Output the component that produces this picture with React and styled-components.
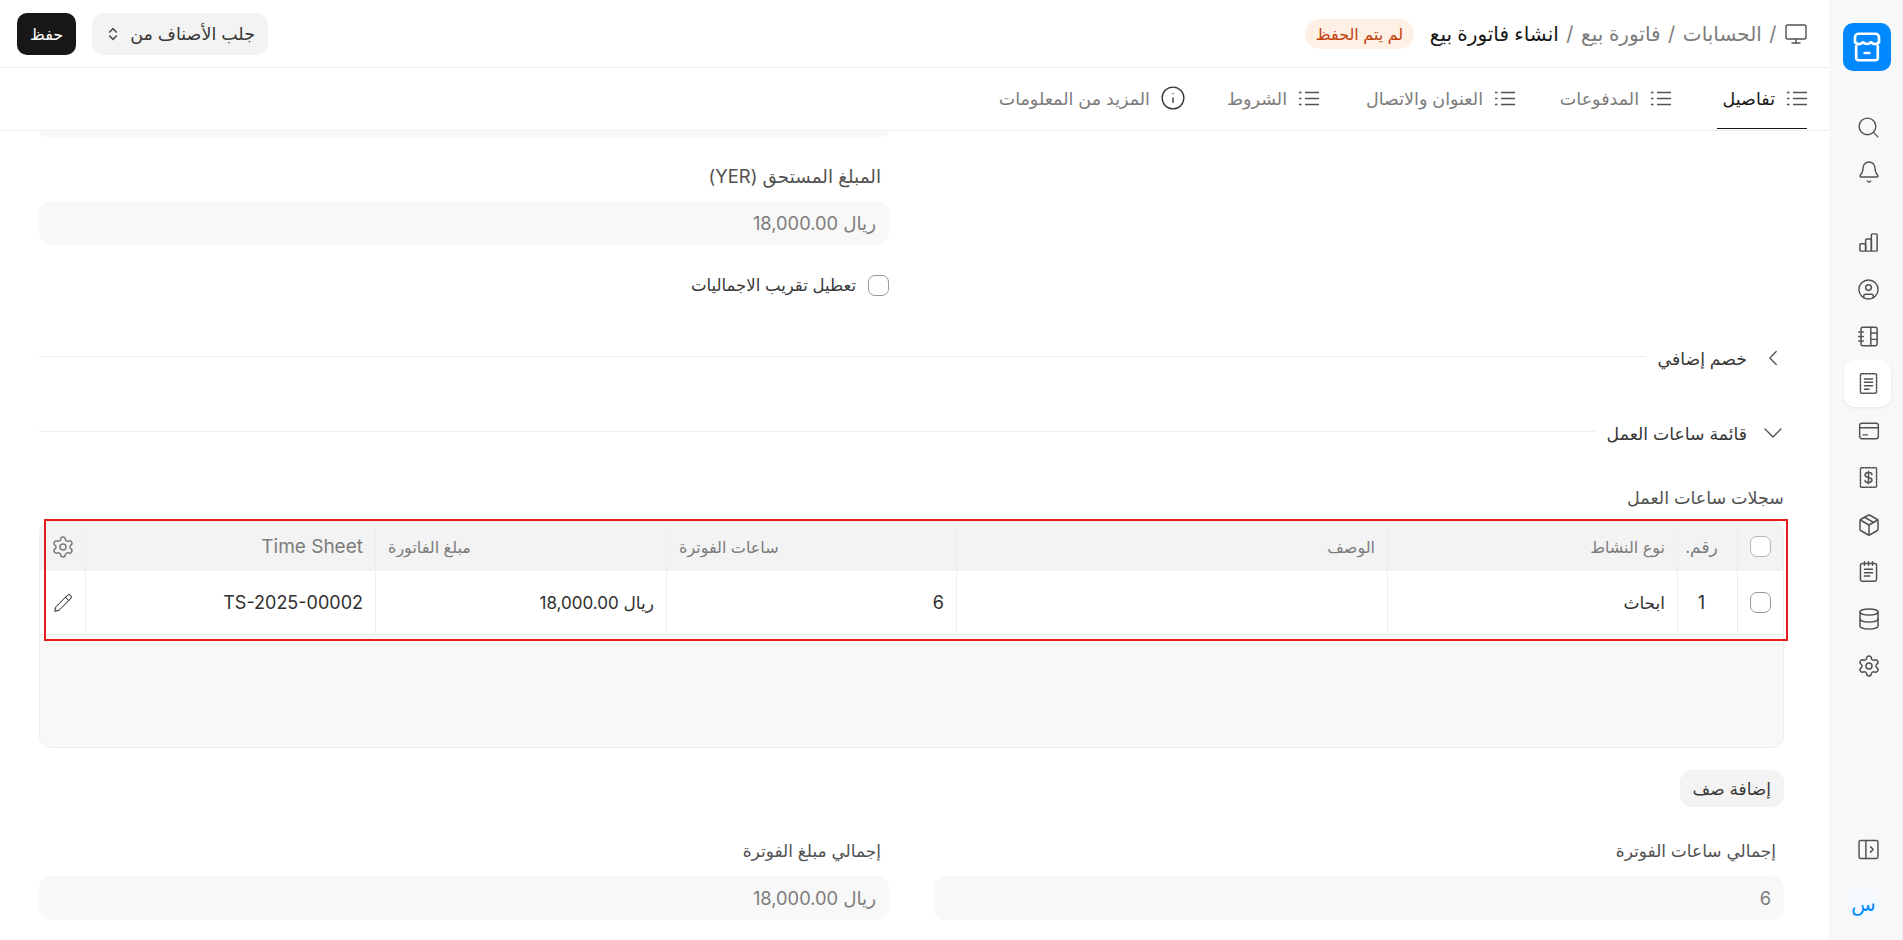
import React from 'react'
import styled, { createGlobalStyle } from 'styled-components'
import { Monitor, Info, Search, Bell, CircleUser, Settings, Package, Database, ChevronLeft, ChevronDown, ChevronsUpDown, Pencil } from 'lucide-react'

const GlobalStyle = createGlobalStyle`
  html, body { margin: 0; padding: 0; height: 100%; background: #fff; }
  body { font-family: Inter, "Noto Sans", "DejaVu Sans", sans-serif; color: #171717; overflow: hidden; }
  * { box-sizing: border-box; }
`

const Page = styled.div`
  direction: rtl;
  display: flex;
  height: 940px;
  overflow: hidden;
`

/* ---------- sidebar ---------- */
const Sidebar = styled.aside`
  width: 74px;
  flex: none;
  background: #f8f8f8;
  border-right: 1px solid #ededed;
  display: flex;
  flex-direction: column;
  align-items: center;
  padding: 23px 0 0 3px;
  direction: ltr;
  color: #525252;
`
const Logo = styled.div`
  width: 48px;
  height: 48px;
  border-radius: 10px;
  background: #0089ff;
  display: flex;
  align-items: center;
  justify-content: center;
`
const SideGroup = styled.div`
  display: flex;
  flex-direction: column;
  align-items: center;
  margin-top: ${p => p.$top}px;
`
const SideItem = styled.div`
  width: 47px;
  height: ${p => p.$h || 47}px;
  padding-left: 3px;
  border-radius: 10px;
  display: flex;
  align-items: center;
  justify-content: center;
  background: ${p => (p.$active ? '#fff' : 'transparent')};
  box-shadow: ${p => (p.$active ? '0 1px 3px rgba(0,0,0,.08)' : 'none')};
`
const SideBottom = styled.div`
  margin-top: auto;
  padding-bottom: 20px;
  display: flex;
  flex-direction: column;
  align-items: center;
  gap: 27px;
  padding-left: 3px;
`
const Avatar = styled.div`
  width: 33px;
  height: 33px;
  border-radius: 50%;
  background: #f3f9ff;
  color: #0089ff;
  font-size: 20px;
  display: flex;
  align-items: center;
  justify-content: center;
  margin-right: 10px;
`

/* ---------- main ---------- */
const Main = styled.main`
  flex: 1;
  min-width: 0;
  display: flex;
  flex-direction: column;
`
const TopBar = styled.header`
  height: 68px;
  flex: none;
  border-bottom: 1px solid #ededed;
  display: flex;
  align-items: center;
  justify-content: space-between;
  padding: 0 21px 0 17px;
`
const Crumbs = styled.div`
  display: flex;
  align-items: center;
  gap: 7.500px;
  font-size: 20px;
  color: #7c7c7c;
`
const CrumbTitle = styled.span`
  color: #171717;
  font-weight: 500;
`
const Pill = styled.span`
  height: 30px;
  padding: 0 11px;
  border-radius: 15px;
  background: #fff0e6;
  color: #c2410c;
  font-size: 16px;
  display: inline-flex;
  align-items: center;
  margin-right: 8px;
`
const Actions = styled.div`
  display: flex;
  align-items: center;
  gap: 16px;
`
const Button = styled.button`
  font-family: inherit;
  height: ${p => p.$h || 42}px;
  border: 0;
  border-radius: ${p => (p.$dark ? 10 : 12)}px;
  padding: 0 ${p => p.$pad || 13}px;
  background: ${p => (p.$dark ? '#171717' : '#f3f3f3')};
  color: ${p => (p.$dark ? '#fff' : '#383838')};
  font-size: ${p => p.$size || 17.5}px;
  font-weight: ${p => (p.$dark ? 500 : 400)};
  display: inline-flex;
  align-items: center;
  gap: 9px;
`
const Tabs = styled.nav`
  height: 63px;
  flex: none;
  border-bottom: 1px solid #ededed;
  display: flex;
  align-items: stretch;
  gap: 46px;
  padding-right: 22px;
`
const Tab = styled.div`
  display: flex;
  align-items: center;
  gap: 12px;
  font-size: 17.500px;
  height: 61px;
  color: ${p => (p.$active ? '#171717' : '#7c7c7c')};
  border-bottom: 1px solid ${p => (p.$active ? '#171717' : 'transparent')};
`
const TabText = styled.span`
  width: ${p => p.$w}px;
  white-space: nowrap;
`
const InfoIcon = styled(Info)`
  margin: 0 -2px;
`
const Content = styled.div`
  flex: 1;
  overflow: hidden;
  padding: 0 45px 0 39px;
`
const CutField = styled.div`
  width: 850px;
  height: 6px;
  margin-right: auto;
  background: #f8f8f8;
  border-radius: 0 0 12px 12px;
`
const Columns = styled.div`
  display: grid;
  grid-template-columns: 850px 850px;
  justify-content: space-between;
  margin-top: ${p => p.$top || 0}px;
`
const Field = styled.div`
  display: flex;
  flex-direction: column;
`
const Label = styled.label`
  font-size: ${p => p.$size || 17}px;
  line-height: 23px;
  height: 23px;
  color: #525252;
  padding-right: 8px;
  margin-bottom: 13px;
`
const Value = styled.div`
  height: 44px;
  border-radius: 12px;
  background: #f8f8f8;
  color: #7c7c7c;
  font-size: 18.300px;
  display: flex;
  align-items: center;
  padding: 0 13px;
`
const CheckRow = styled.div`
  display: flex;
  align-items: center;
  gap: 12px;
  font-size: 16.500px;
  line-height: 21px;
  color: #383838;
  margin-top: 30px;
`
const Check = styled.span`
  display: block;
  width: 21px;
  height: 21px;
  flex: none;
  border: 1px solid ${p => (p.$light ? '#b5b5b5' : '#999')};
  border-radius: 7px;
  background: #fff;
`
const Section = styled.div`
  display: flex;
  align-items: center;
  height: 24px;
  margin-top: ${p => p.$top}px;
  color: #383838;
  font-size: 17.300px;
`
const SectionIcon = styled.span`
  width: 22px;
  margin-left: 15px;
  display: flex;
  justify-content: center;
  color: #525252;
  svg { flex: none; }
`
const SectionLine = styled.span`
  flex: 1;
  height: 1px;
  background: #ededed;
  margin: 0 12px 3px 0;
`
const TableTitle = styled.div`
  font-size: 17.500px;
  line-height: 24px;
  color: #525252;
  margin-top: 41px;
  margin-bottom: 11px;
`
const TableBox = styled.div`
  position: relative;
  height: 227px;
  background: #f8f8f8;
  border: 1px solid #ededed;
  border-radius: 12px;
`
const Highlight = styled.div`
  position: absolute;
  top: -3px;
  left: 4px;
  right: -5px;
  height: 122px;
  border: 2px solid #e81c1c;
  pointer-events: none;
`
const Row = styled.div`
  display: grid;
  grid-template-columns: 46px 60px 290px 431px 290px 291px 290px 1fr;
  height: ${p => p.$h}px;
  background: ${p => (p.$head ? '#f3f3f3' : '#fff')};
  border-radius: ${p => (p.$head ? '12px 12px 0 0' : '0')};
  border-bottom: ${p => (p.$head ? '0' : '1px solid #ededed')};
`
const Cell = styled.div`
  display: flex;
  align-items: center;
  justify-content: ${p => (p.$center ? 'center' : p.$end ? 'flex-end' : 'flex-start')};
  padding: 0 ${p => (p.$center ? 0 : 12)}px;
  padding-right: ${p => (p.$num ? 12 : undefined)}px;
  border-left: ${p => (p.$last ? '0' : '1px solid #ededed')};
  font-size: ${p => p.$size || (p.$head ? 16 : 17)}px;
  color: ${p => (p.$head ? '#7c7c7c' : '#2f2f2f')};
`
const AddRow = styled.div`
  margin-top: 22px;
`

const ListIcon = () => (
  <svg width="20" height="15" viewBox="0 0 20 15" fill="none" stroke="#525252" strokeWidth="1.300">
    <path d="M6 1.500h14M6 7.500h14M6 13.500h14M0 1.500h2.500M0 7.500h2.500M0 13.500h2.500" />
  </svg>
)
const Bars = () => (
  <svg width="23" height="23" viewBox="0 0 20 20" fill="none" stroke="currentColor" strokeWidth="1.300" strokeLinejoin="round">
    <rect x="2.500" y="11" width="5" height="6.500" rx="1" />
    <rect x="7.500" y="7" width="5" height="10.500" rx="1" />
    <rect x="12.500" y="2.500" width="5" height="15" rx="1" />
  </svg>
)
const Notebook = () => (
  <svg width="23" height="23" viewBox="0 0 20 20" fill="none" stroke="currentColor" strokeWidth="1.300" strokeLinecap="round">
    <rect x="3.500" y="2" width="14" height="16" rx="1.500" />
    <path d="M12 2v16M12 7h5.500M12 12.500h5.500M1.500 6h4M1.500 10h4M1.500 14h4" />
  </svg>
)
const Receipt = () => (
  <svg width="23" height="23" viewBox="0 0 20 20" fill="none" stroke="currentColor" strokeWidth="1.300" strokeLinecap="round">
    <rect x="3" y="1.500" width="14" height="17" rx="1" strokeDasharray="2 1" />
    <path d="M6.500 6h7M6.500 9h7M6.500 12h7M6.500 15h4" />
  </svg>
)
const Card = () => (
  <svg width="22" height="22" viewBox="0 0 20 20" fill="none" stroke="currentColor" strokeWidth="1.300" strokeLinecap="round">
    <rect x="1.500" y="3" width="17" height="14" rx="2" />
    <path d="M1.500 7h17M4.500 13.500h4" />
  </svg>
)
const MoneyReceipt = () => (
  <svg width="23" height="23" viewBox="0 0 20 20" fill="none" stroke="currentColor" strokeWidth="1.300" strokeLinecap="round">
    <rect x="3" y="1.500" width="14" height="17" rx="1" strokeDasharray="2 1" />
    <path d="M13 7.500c0-1-1.200-1.800-3-1.800s-3 .8-3 2.100 1.200 1.900 3 2.200 3 .9 3 2.200-1.200 2.100-3 2.100-3-.8-3-1.800M10 4.500v11" />
  </svg>
)
const Clipboard = () => (
  <svg width="23" height="23" viewBox="0 0 20 20" fill="none" stroke="currentColor" strokeWidth="1.300" strokeLinecap="round">
    <rect x="3" y="3" width="14" height="15.500" rx="1.500" />
    <path d="M6.500 1.500v3M10 1.500v3M13.500 1.500v3M6.500 8h7M6.500 11h7M6.500 14h4.500" />
  </svg>
)
const PanelIcon = () => (
  <svg width="21" height="21" viewBox="0 0 20 20" fill="none" stroke="currentColor" strokeWidth="1.400" strokeLinecap="round" strokeLinejoin="round">
    <rect x="1" y="1.500" width="18" height="17" rx="1.500" />
    <path d="M7.500 1.500v17M12 7.500l2.500 2.500-2.500 2.500" />
  </svg>
)
const StoreLogo = () => (
  <svg width="36" height="36" viewBox="0 0 30 30" fill="none" stroke="#fff" strokeWidth="2.200" strokeLinecap="round" strokeLinejoin="round">
    <path d="M5 11V7a3 3 0 0 1 3-3h14a3 3 0 0 1 3 3v4" />
    <path d="M5 11c2.500 2 5 2 6.700 0 1.800 2 4.800 2 6.600 0 1.700 2 4.200 2 6.700 0" />
    <path d="M6 14v10a2 2 0 0 0 2 2h14a2 2 0 0 0 2-2V14" />
    <path d="M13 20h4" />
  </svg>
)

const tabs = [['تفاصيل', 58], ['المدفوعات', 78], ['العنوان والاتصال', 118], ['الشروط', 57]]

export default function App() {
  return (
    <>
      <GlobalStyle />
      <Page>
        <Sidebar>
          <Logo><StoreLogo /></Logo>
          <SideGroup $top={33}>
            <SideItem $h={46}><Search size={25} strokeWidth={1.3} /></SideItem>
            <SideItem $h={44}><Bell size={24} strokeWidth={1.4} /></SideItem>
          </SideGroup>
          <SideGroup $top={25}>
            <SideItem><Bars /></SideItem>
            <SideItem><CircleUser size={23} strokeWidth={1.5} /></SideItem>
            <SideItem><Notebook /></SideItem>
            <SideItem $active><Receipt /></SideItem>
            <SideItem><Card /></SideItem>
            <SideItem><MoneyReceipt /></SideItem>
            <SideItem><Package size={24} strokeWidth={1.5} /></SideItem>
            <SideItem><Clipboard /></SideItem>
            <SideItem><Database size={24} strokeWidth={1.5} /></SideItem>
            <SideItem><Settings size={24} strokeWidth={1.5} /></SideItem>
          </SideGroup>
          <SideBottom>
            <PanelIcon />
            <Avatar>س</Avatar>
          </SideBottom>
        </Sidebar>
        <Main>
          <TopBar>
            <Crumbs>
              <Monitor size={24} strokeWidth={1.4} color="#525252" />
              <span>/</span>
              <span>الحسابات</span>
              <span>/</span>
              <span>فاتورة بيع</span>
              <span>/</span>
              <CrumbTitle>انشاء فاتورة بيع</CrumbTitle>
              <Pill>لم يتم الحفظ</Pill>
            </Crumbs>
            <Actions>
              <Button>جلب الأصناف من <ChevronsUpDown size={16} strokeWidth={2.5} color="#525252" /></Button>
              <Button $dark $size={16}>حفظ</Button>
            </Actions>
          </TopBar>
          <Tabs>
            {tabs.map(([t, w], i) => (
              <Tab key={t} $active={i === 0}><ListIcon /><TabText $w={w}>{t}</TabText></Tab>
            ))}
            <Tab><InfoIcon size={26} strokeWidth={1.3} color="#383838" /><TabText $w={155}>المزيد من المعلومات</TabText></Tab>
          </Tabs>
          <Content>
            <CutField />
            <Columns $top={28}>
              <span />
              <Field>
                <Label $size={18.4}>المبلغ المستحق (YER)</Label>
                <Value>ريال 18,000.00</Value>
                <CheckRow><Check />تعطيل تقريب الاجماليات</CheckRow>
              </Field>
            </Columns>
            <Section $top={50}>
              <SectionIcon><ChevronLeft size={26} strokeWidth={1.2} /></SectionIcon>
              خصم إضافي
              <SectionLine />
            </Section>
            <Section $top={51}>
              <SectionIcon><ChevronDown size={32} strokeWidth={1} /></SectionIcon>
              قائمة ساعات العمل
              <SectionLine />
            </Section>
            <TableTitle>سجلات ساعات العمل</TableTitle>
            <TableBox>
              <Row $head $h={49}>
                <Cell $center><Check $light /></Cell>
                <Cell $head $center $num $size={17}>رقم.</Cell>
                <Cell $head>نوع النشاط</Cell>
                <Cell $head>الوصف</Cell>
                <Cell $head $end>ساعات الفوترة</Cell>
                <Cell $head $end>مبلغ الفاتورة</Cell>
                <Cell $head $size={19}>Time Sheet</Cell>
                <Cell $center $last><Settings size={24} strokeWidth={1.5} color="#7c7c7c" /></Cell>
              </Row>
              <Row $h={64}>
                <Cell $center><Check /></Cell>
                <Cell $center $num $size={18}>1</Cell>
                <Cell>ابحاث</Cell>
                <Cell />
                <Cell $size={18}>6</Cell>
                <Cell>ريال 18,000.00</Cell>
                <Cell $size={18}>TS-2025-00002</Cell>
                <Cell $center $last><Pencil size={20} strokeWidth={1.2} color="#171717" /></Cell>
              </Row>
              <Highlight />
            </TableBox>
            <AddRow><Button $h={37} $size={17}>إضافة صف</Button></AddRow>
            <Columns $top={33}>
              <Field>
                <Label>إجمالي ساعات الفوترة</Label>
                <Value>6</Value>
              </Field>
              <Field>
                <Label>إجمالي مبلغ الفوترة</Label>
                <Value>ريال 18,000.00</Value>
              </Field>
            </Columns>
          </Content>
        </Main>
      </Page>
    </>
  )
}
